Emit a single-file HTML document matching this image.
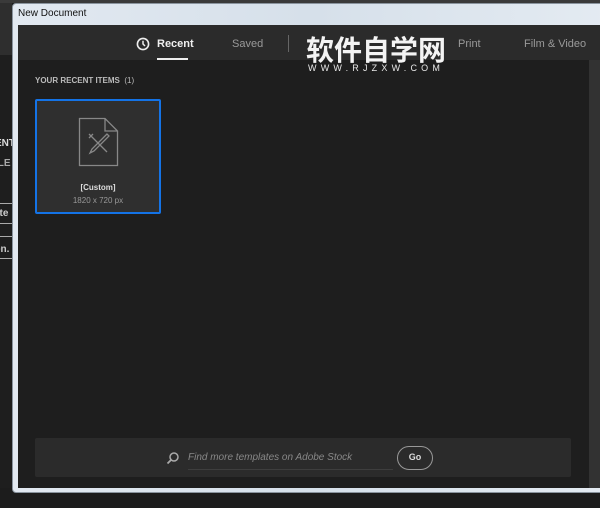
<!DOCTYPE html>
<html><head><meta charset="utf-8"><style>
*{margin:0;padding:0;box-sizing:border-box}
body{width:600px;height:508px;background:#1c1c1c;position:relative;overflow:hidden;font-family:"Liberation Sans",sans-serif}
.a{position:absolute}
</style></head><body>
<div class="a" style="left:0;top:0;width:600px;height:3px;background:#3a3a3a"></div>
<div class="a" style="left:0;top:3px;width:12px;height:52px;background:#2e2e2e"></div>
<div class="a" style="left:0;top:55px;width:12px;height:433px;background:#1e1e1e"></div>
<div class="a" style="left:0;top:138px;font-size:10px;font-weight:bold;color:#ddd;margin-left:-5px">ENT</div>
<div class="a" style="left:0;top:158px;font-size:10px;font-weight:bold;color:#aaa;margin-left:-5px">ILE</div>
<div class="a" style="left:0;top:203px;width:12px;height:1px;background:#aaa"></div>
<div class="a" style="left:0;top:208px;font-size:10px;font-weight:bold;color:#ccc;margin-left:-6px">ate</div>
<div class="a" style="left:0;top:223px;width:12px;height:1px;background:#aaa"></div>
<div class="a" style="left:0;top:236px;width:12px;height:1px;background:#aaa"></div>
<div class="a" style="left:0;top:244px;font-size:10px;font-weight:bold;color:#ccc;margin-left:-5px">en.</div>
<div class="a" style="left:0;top:258px;width:12px;height:1px;background:#aaa"></div>
<!-- window frame -->
<div class="a" style="left:12px;top:3px;width:600px;height:490px;background:linear-gradient(90deg,#e2e9f1,#d6e0ea 50%,#e4ebf2);border-radius:4px 0 0 4px;border:1px solid #8a949e"></div>
<div class="a" style="left:18px;top:8px;font-size:10px;color:#111">New Document</div>
<div class="a" style="left:18px;top:25px;width:582px;height:463px;background:#1e1e1e"></div>
<div class="a" style="left:18px;top:25px;width:582px;height:35px;background:#2b2b2b"></div>
<div class="a" style="left:589px;top:60px;width:11px;height:428px;background:#323232"></div>
<!-- tabs -->
<svg class="a" style="left:136px;top:37px" width="14" height="14" viewBox="0 0 14 14"><circle cx="7" cy="7" r="5.6" fill="none" stroke="#eee" stroke-width="1.6"/><path d="M7 3.8V7l2 2" fill="none" stroke="#eee" stroke-width="1.5"/></svg>
<div class="a" style="left:157px;top:38px;font-size:11px;font-weight:bold;color:#f0f0f0">Recent</div>
<div class="a" style="left:157px;top:58px;width:31px;height:2px;background:#eee"></div>
<div class="a" style="left:232px;top:38px;font-size:11px;color:#9a9a9a">Saved</div>
<div class="a" style="left:288px;top:35px;width:1px;height:17px;background:#666"></div>
<div class="a" style="left:458px;top:38px;font-size:11px;color:#9a9a9a">Print</div>
<div class="a" style="left:524px;top:38px;font-size:11px;color:#9a9a9a">Film &amp; Video</div>
<div class="a" style="left:306px;top:34px;font-size:28px;font-weight:bold;color:#f4f4f4;font-family:'Noto Sans CJK SC',sans-serif;line-height:30px">软件自学网</div>
<div class="a" style="left:308px;top:63px;font-size:9px;color:#e8e8e8;letter-spacing:4.2px;line-height:10px">WWW.RJZXW.COM</div>
<!-- content -->
<div class="a" style="left:35px;top:76px;font-size:8px;font-weight:bold;color:#bbb">YOUR RECENT ITEMS &nbsp;<span style="font-weight:normal">(1)</span></div>
<div class="a" style="left:35px;top:99px;width:126px;height:115px;background:#2f2f2f;border:2px solid #1473e6;border-radius:2px"></div>
<svg class="a" style="left:78px;top:117px" width="42" height="50" viewBox="0 0 42 50"><path d="M1.5 1.5H27L39.5 14V48.5H1.5Z M27 1.5V14H39.5" fill="none" stroke="#888" stroke-width="1.3"/><path d="M11 17L29 35M11 21l4-4M29 17L14 32l-2 4 4-2L31 19Z" fill="none" stroke="#888" stroke-width="1.3"/></svg>
<div class="a" style="left:35px;top:183px;width:126px;text-align:center;font-size:8px;font-weight:bold;color:#ddd">[Custom]</div>
<div class="a" style="left:35px;top:196px;width:126px;text-align:center;font-size:8px;color:#999">1820 x 720 px</div>
<!-- search -->
<div class="a" style="left:35px;top:438px;width:536px;height:39px;background:#2b2b2b;border-radius:2px"></div>
<svg class="a" style="left:166px;top:451px" width="14" height="14" viewBox="0 0 14 14"><circle cx="8" cy="6" r="4" fill="none" stroke="#aaa" stroke-width="1.5"/><path d="M5 9L1.5 12.5" stroke="#aaa" stroke-width="1.8"/></svg>
<div class="a" style="left:188px;top:452px;font-size:10px;font-style:italic;color:#888">Find more templates on Adobe Stock</div>
<div class="a" style="left:188px;top:469px;width:205px;height:1px;background:#3e3e3e"></div>
<div class="a" style="left:397px;top:446px;width:36px;height:24px;border:1.5px solid #999;border-radius:12px;font-size:9px;font-weight:bold;color:#ddd;text-align:center;line-height:21px">Go</div>
</body></html>
